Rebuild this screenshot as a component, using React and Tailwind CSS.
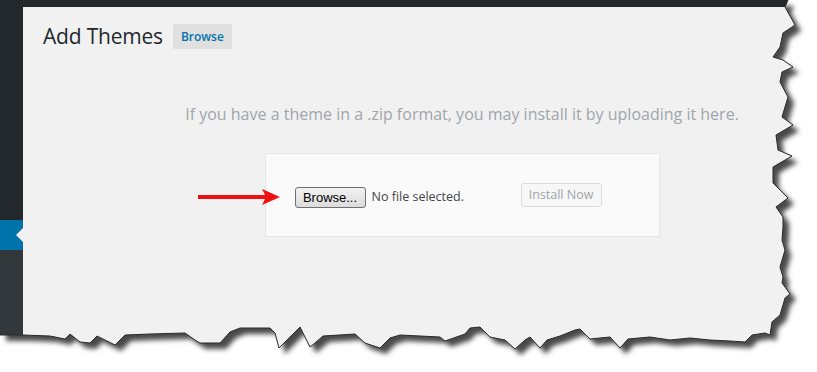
import React from 'react'

// torn-paper edge of the screenshot (right side, then bottom)
const EDGE = [
  [788, 0], [785, 7], [795, 25], [783, 33], [780, 47], [773, 57], [783, 60], [793, 67], [782, 72],
  [780, 82], [788, 97], [782, 117], [793, 125], [776, 135], [778, 150], [792, 156], [773, 167],
  [773, 183], [783, 193], [788, 198], [776, 207], [783, 217], [783, 227], [782, 240], [785, 250],
  [780, 267], [783, 277], [782, 283], [790, 294], [785, 298], [783, 305], [780, 315], [772, 322],
  [770, 335], [765, 333], [752, 335], [745, 342], [730, 341], [710, 340], [690, 338], [670, 340],
  [650, 337], [628, 339], [620, 348], [610, 337], [590, 339], [580, 329], [575, 330], [560, 336],
  [547, 340], [540, 348], [530, 337], [525, 340], [515, 349], [505, 340], [490, 337], [480, 327],
  [470, 328], [465, 334], [445, 341], [440, 337], [400, 335], [390, 338], [380, 348], [365, 343],
  [355, 334], [323, 336], [315, 343], [310, 347], [300, 327], [279, 348], [275, 333], [270, 328],
  [240, 328], [230, 332], [220, 343], [200, 343], [195, 340], [185, 333], [150, 334], [125, 335],
  [115, 345], [107, 341], [97, 336], [90, 343], [80, 342], [70, 334], [65, 339], [50, 336],
  [23, 335], [0, 335],
]

const edgeLine = EDGE.map(([x, y], i) => `${i ? 'L' : 'M'}${x} ${y}`).join(' ')
const page = `M0 0 ${edgeLine.replace('M', 'L')} Z`
const outside = `M0 0H817V372H0Z ${page}`

function TornEdge() {
  return (
    <svg className="absolute inset-0 pointer-events-none" width="817" height="372" viewBox="0 0 817 372">
      <defs>
        <filter id="soft" x="-10%" y="-10%" width="120%" height="120%">
          <feGaussianBlur stdDeviation="2.4" />
        </filter>
        <clipPath id="outside">
          <path d={outside} clipRule="evenodd" />
        </clipPath>
      </defs>
      <path d={outside} fill="#ffffff" fillRule="evenodd" />
      <g clipPath="url(#outside)">
        <path d={page} transform="translate(6 6)" fill="#4a4a4a" filter="url(#soft)" />
      </g>
      <path d={edgeLine} fill="none" stroke="#2a2a2a" strokeWidth="1" />
    </svg>
  )
}

function RedArrow() {
  return (
    <svg className="absolute left-[196px] top-[187px]" width="86" height="20" viewBox="0 0 86 20">
      <rect x="2" y="8" width="68" height="4" fill="#ee1111" />
      <polygon points="66,2 84,10 66,18 70,10" fill="#ee1111" />
    </svg>
  )
}

export default function App() {
  return (
    <div className="relative w-[817px] h-[372px] overflow-hidden bg-white font-['Open_Sans',sans-serif]">
      <div className="h-[7px] bg-[#23282d]" />
      <div className="flex h-[365px]">
        <aside className="w-[23px] flex flex-col">
          <div className="h-[213px] bg-[#23282d]" />
          <div className="h-[30px] bg-[#0073aa] relative">
            <svg className="absolute right-0 top-[8px]" width="7" height="14" viewBox="0 0 7 14">
              <polygon points="7,0 0,7 7,14" fill="#f1f1f1" />
            </svg>
          </div>
          <div className="flex-1 bg-[#32373c]" />
        </aside>

        <main className="flex-1 bg-[#f1f1f1] pl-[20px] pt-[15px] overflow-hidden">
          <div className="w-[838px]">
            <div className="flex items-center gap-[10px]">
              <h1 className="text-[21px] leading-[29px] text-[#23282d] font-normal tracking-[-0.2px]">Add Themes</h1>
              <button className="h-[25px] px-[8px] rounded-[2px] bg-[#e0e0e0] text-[12px] font-semibold text-[#0073aa]">
                Browse
              </button>
            </div>

            <p className="mt-[51px] text-center text-[16px] leading-[24px] text-[#a0a5aa]">
              If you have a theme in a .zip format, you may install it by uploading it here.
            </p>

            <div className="mx-auto mt-[27px] w-[395px] h-[84px] border border-[#e5e5e5] bg-[#fafafa] flex items-center pl-[29px]">
              <div className="w-[226px] flex items-center gap-[6px] mt-[4px]">
                <button className="w-[71px] h-[21px] rounded-[3px] border border-[#707070] bg-gradient-to-b from-[#f2f2f2] to-[#dcdcdc] text-[13px] text-black font-['Liberation_Sans',sans-serif] leading-none">
                  Browse...
                </button>
                <span className="text-[12.5px] text-[#444444]">No file selected.</span>
              </div>
              <button className="w-[81px] h-[24px] rounded-[3px] border border-[#dddddd] bg-[#f7f7f7] text-[12.5px] text-[#a0a5aa]">
                Install Now
              </button>
            </div>
          </div>
        </main>
      </div>

      <RedArrow />
      <TornEdge />
    </div>
  )
}
